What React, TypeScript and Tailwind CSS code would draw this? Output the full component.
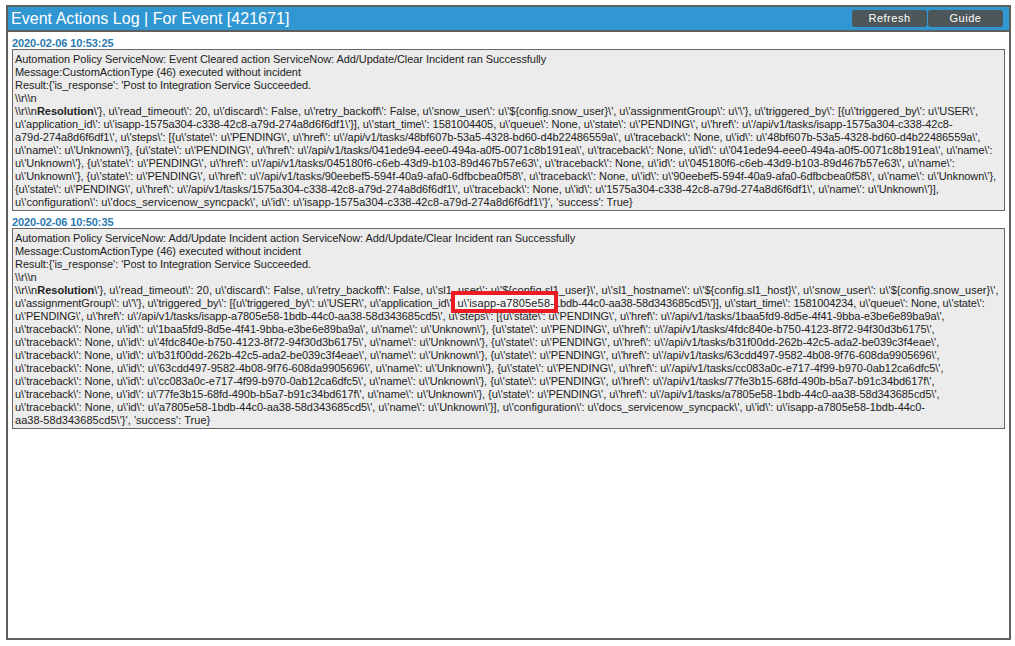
import type { ReactNode } from "react";

const r = String.raw;
const resolution = (rest: string) => (
  <>
    {r`\\r\\n`}
    <b>Resolution</b>
    {rest}
  </>
);

const base = "tracking-[-0.06px]";

const block1: [ReactNode, string][] = [
  [r`Automation Policy ServiceNow: Event Cleared action ServiceNow: Add/Update/Clear Incident ran Successfully`, base],
  [r`Message:CustomActionType (46) executed without incident`, base],
  [r`Result:{'is_response': 'Post to Integration Service Succeeded.`, base],
  [r`\\r\\n`, base],
  [resolution(r`\'}, u\'read_timeout\': 20, u\'discard\': False, u\'retry_backoff\': False, u\'snow_user\': u\'$` + "{config.snow_user}" + r`\', u\'assignmentGroup\': u\'\'}, u\'triggered_by\': [{u\'triggered_by\': u\'USER\',`), "tracking-[-0.014px]"],
  [r`u\'application_id\': u\'isapp-1575a304-c338-42c8-a79d-274a8d6f6df1\'}], u\'start_time\': 1581004405, u\'queue\': None, u\'state\': u\'PENDING\', u\'href\': u\'/api/v1/tasks/isapp-1575a304-c338-42c8-`, base],
  [r`a79d-274a8d6f6df1\', u\'steps\': [{u\'state\': u\'PENDING\', u\'href\': u\'/api/v1/tasks/48bf607b-53a5-4328-bd60-d4b22486559a\', u\'traceback\': None, u\'id\': u\'48bf607b-53a5-4328-bd60-d4b22486559a\',`, base],
  [r`u\'name\': u\'Unknown\'}, {u\'state\': u\'PENDING\', u\'href\': u\'/api/v1/tasks/041ede94-eee0-494a-a0f5-0071c8b191ea\', u\'traceback\': None, u\'id\': u\'041ede94-eee0-494a-a0f5-0071c8b191ea\', u\'name\':`, base],
  [r`u\'Unknown\'}, {u\'state\': u\'PENDING\', u\'href\': u\'/api/v1/tasks/045180f6-c6eb-43d9-b103-89d467b57e63\', u\'traceback\': None, u\'id\': u\'045180f6-c6eb-43d9-b103-89d467b57e63\', u\'name\':`, "tracking-[0px]"],
  [r`u\'Unknown\'}, {u\'state\': u\'PENDING\', u\'href\': u\'/api/v1/tasks/90eebef5-594f-40a9-afa0-6dfbcbea0f58\', u\'traceback\': None, u\'id\': u\'90eebef5-594f-40a9-afa0-6dfbcbea0f58\', u\'name\': u\'Unknown\'},`, "tracking-[-0.03px]"],
  [r`{u\'state\': u\'PENDING\', u\'href\': u\'/api/v1/tasks/1575a304-c338-42c8-a79d-274a8d6f6df1\', u\'traceback\': None, u\'id\': u\'1575a304-c338-42c8-a79d-274a8d6f6df1\', u\'name\': u\'Unknown\'}],`, base],
  [r`u\'configuration\': u\'docs_servicenow_syncpack\', u\'id\': u\'isapp-1575a304-c338-42c8-a79d-274a8d6f6df1\'}', 'success': True}`, "tracking-[0.04px]"],
];

const highlighted = (
  <>
    <span className="tracking-[-0.1px]">{r`u\'assignmentGroup\': u\'\'}, u\'triggered_by\': [{u\'triggered_by\': u\'USER\', u\'application_id\': `}</span>
    <span className="relative inline-block tracking-[0.15px]">
      <span className="absolute -top-[6px] -bottom-[3px] -left-[6px] -right-[4px] border-[4px] border-[#ed1c24] bg-[#f6f6f6]" />
      <span className="relative">{r`u\'isapp-a7805e58-`}</span>
    </span>
    <span className="tracking-[-0.12px]">{r`1bdb-44c0-aa38-58d343685cd5\'}], u\'start_time\': 1581004234, u\'queue\': None, u\'state\':`}</span>
  </>
);

const block2: [ReactNode, string][] = [
  [r`Automation Policy ServiceNow: Add/Update Incident action ServiceNow: Add/Update/Clear Incident ran Successfully`, base],
  [r`Message:CustomActionType (46) executed without incident`, base],
  [r`Result:{'is_response': 'Post to Integration Service Succeeded.`, base],
  [r`\\r\\n`, base],
  [resolution(r`\'}, u\'read_timeout\': 20, u\'discard\': False, u\'retry_backoff\': False, u\'sl1_user\': u\'$` + "{config.sl1_user}" + r`\', u\'sl1_hostname\': u\'$` + "{config.sl1_host}" + r`\', u\'snow_user\': u\'$` + "{config.snow_user}" + r`\',`), "tracking-[0.027px]"],
  [highlighted, base],
  [r`u\'PENDING\', u\'href\': u\'/api/v1/tasks/isapp-a7805e58-1bdb-44c0-aa38-58d343685cd5\', u\'steps\': [{u\'state\': u\'PENDING\', u\'href\': u\'/api/v1/tasks/1baa5fd9-8d5e-4f41-9bba-e3be6e89ba9a\',`, "tracking-[-0.075px]"],
  [r`u\'traceback\': None, u\'id\': u\'1baa5fd9-8d5e-4f41-9bba-e3be6e89ba9a\', u\'name\': u\'Unknown\'}, {u\'state\': u\'PENDING\', u\'href\': u\'/api/v1/tasks/4fdc840e-b750-4123-8f72-94f30d3b6175\',`, base],
  [r`u\'traceback\': None, u\'id\': u\'4fdc840e-b750-4123-8f72-94f30d3b6175\', u\'name\': u\'Unknown\'}, {u\'state\': u\'PENDING\', u\'href\': u\'/api/v1/tasks/b31f00dd-262b-42c5-ada2-be039c3f4eae\',`, "tracking-[-0.03px]"],
  [r`u\'traceback\': None, u\'id\': u\'b31f00dd-262b-42c5-ada2-be039c3f4eae\', u\'name\': u\'Unknown\'}, {u\'state\': u\'PENDING\', u\'href\': u\'/api/v1/tasks/63cdd497-9582-4b08-9f76-608da9905696\',`, base],
  [r`u\'traceback\': None, u\'id\': u\'63cdd497-9582-4b08-9f76-608da9905696\', u\'name\': u\'Unknown\'}, {u\'state\': u\'PENDING\', u\'href\': u\'/api/v1/tasks/cc083a0c-e717-4f99-b970-0ab12ca6dfc5\',`, "tracking-[-0.03px]"],
  [r`u\'traceback\': None, u\'id\': u\'cc083a0c-e717-4f99-b970-0ab12ca6dfc5\', u\'name\': u\'Unknown\'}, {u\'state\': u\'PENDING\', u\'href\': u\'/api/v1/tasks/77fe3b15-68fd-490b-b5a7-b91c34bd617f\',`, "tracking-[-0.045px]"],
  [r`u\'traceback\': None, u\'id\': u\'77fe3b15-68fd-490b-b5a7-b91c34bd617f\', u\'name\': u\'Unknown\'}, {u\'state\': u\'PENDING\', u\'href\': u\'/api/v1/tasks/a7805e58-1bdb-44c0-aa38-58d343685cd5\',`, base],
  [r`u\'traceback\': None, u\'id\': u\'a7805e58-1bdb-44c0-aa38-58d343685cd5\', u\'name\': u\'Unknown\'}], u\'configuration\': u\'docs_servicenow_syncpack\', u\'id\': u\'isapp-a7805e58-1bdb-44c0-`, "tracking-[-0.03px]"],
  [r`aa38-58d343685cd5\'}', 'success': True}`, "tracking-[0.04px]"],
];

function Entry({ time, lines }: { time: string; lines: [ReactNode, string][] }) {
  return (
    <section>
      <div className="h-[12px] text-[11px] leading-[13px] font-bold tracking-[-0.1px] text-[#2a7ab0]">{time}</div>
      <div className="border border-[#666666] bg-[#ececec] pt-[3px] pr-0 pb-[1px] pl-[2px] text-[11px] leading-[13px] text-[#222222]">
        {lines.map(([content, tracking], i) => (
          <div key={i} className={`h-[13px] whitespace-nowrap ${tracking}`}>
            {content}
          </div>
        ))}
      </div>
    </section>
  );
}

export default function App() {
  return (
    <div className="h-[646px] w-[1015px] bg-white pt-[5px] pl-[6px] font-['Liberation_Sans',Arial,sans-serif]">
      <div className="flex h-[635px] w-[1005px] flex-col border-2 border-[#5f5f5f] bg-white">
        <header className="box-content flex h-[23px] shrink-0 items-center justify-between border-b-2 border-[#5f5f5f] bg-[#3097d3] pl-[3px] pr-[6px]">
          <h1 className="text-[16px] leading-[24px] tracking-[0.03px] text-white">Event Actions Log | For Event [421671]</h1>
          <div className="flex gap-[1px]">
            <button className="h-[17px] w-[75px] rounded-[3px] bg-[#4d5759] text-[11px] leading-[17px] tracking-[0.5px] text-white">Refresh</button>
            <button className="h-[17px] w-[75px] rounded-[3px] bg-[#4d5759] text-[11px] leading-[17px] tracking-[0.5px] text-white">Guide</button>
          </div>
        </header>
        <div className="flex flex-col gap-[5px] pt-[5px] pl-[4px] pr-[4px]">
          <Entry time="2020-02-06 10:53:25" lines={block1} />
          <Entry time="2020-02-06 10:50:35" lines={block2} />
        </div>
      </div>
    </div>
  );
}
